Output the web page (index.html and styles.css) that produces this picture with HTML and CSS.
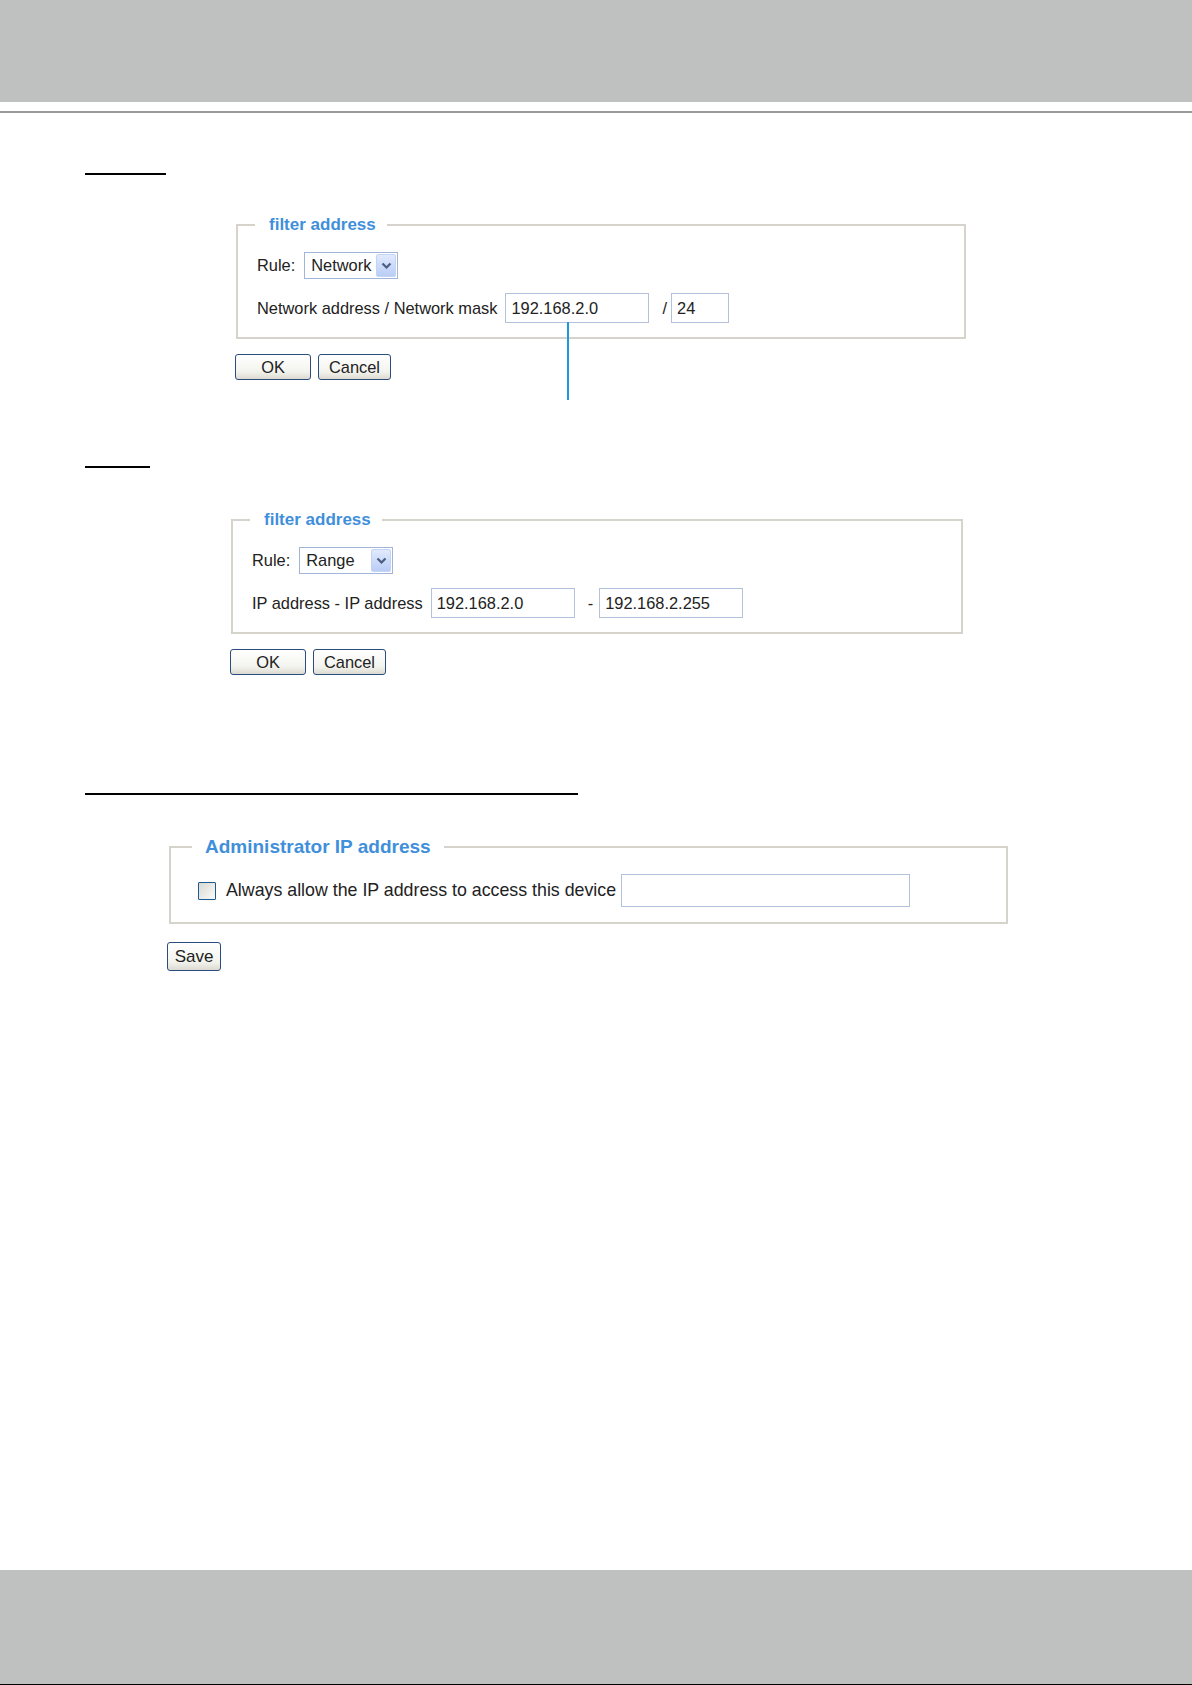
FILE: index.html
```html
<!DOCTYPE html>
<html lang="en">
<head>
  <meta charset="utf-8">
  <title>Access list - filter address</title>
  <link rel="stylesheet" href="styles.css">
</head>
<body>
  <div class="page-header"></div>
  <div class="page-rule"></div>

  <main class="content">
    <div class="title-rule title-rule-network"></div>
    <div class="panel panel-network">
      <fieldset>
        <legend>filter address</legend>
        <div class="row row-first">
          <span class="label">Rule:</span>
          <div class="select-box">
            <span class="select-text">Network</span>
            <span class="select-arrow">
              <svg width="11" height="8" viewBox="0 0 11 8"><path d="M1.5 1.5 L5.5 5.5 L9.5 1.5" fill="none" stroke="#4b5d80" stroke-width="2.2"/></svg>
            </span>
          </div>
        </div>
        <div class="row">
          <span class="label label-wide">Network address / Network mask</span>
          <span class="callout">
            <input class="field field-ip" type="text" value="192.168.2.0">
          </span>
          <span class="sep">/</span>
          <input class="field field-mask" type="text" value="24">
        </div>
      </fieldset>
      <div class="actions">
        <button class="btn btn-ok">OK</button>
        <button class="btn btn-cancel">Cancel</button>
      </div>
    </div>

    <div class="title-rule title-rule-range"></div>
    <div class="panel panel-range">
      <fieldset>
        <legend>filter address</legend>
        <div class="row row-first">
          <span class="label">Rule:</span>
          <div class="select-box">
            <span class="select-text">Range</span>
            <span class="select-arrow">
              <svg width="11" height="8" viewBox="0 0 11 8"><path d="M1.5 1.5 L5.5 5.5 L9.5 1.5" fill="none" stroke="#4b5d80" stroke-width="2.2"/></svg>
            </span>
          </div>
        </div>
        <div class="row">
          <span class="label label-wide">IP address - IP address</span>
          <input class="field field-range" type="text" value="192.168.2.0">
          <span class="sep sep-dash">-</span>
          <input class="field field-range" type="text" value="192.168.2.255">
        </div>
      </fieldset>
      <div class="actions">
        <button class="btn btn-ok">OK</button>
        <button class="btn btn-cancel">Cancel</button>
      </div>
    </div>

    <div class="title-rule title-rule-admin"></div>
    <div class="panel panel-admin">
      <fieldset>
        <legend>Administrator IP address</legend>
        <div class="row row-admin">
          <input class="check" type="checkbox" id="always-allow">
          <label class="check-label" for="always-allow">Always allow the IP address to access this device</label>
          <input class="field field-admin" type="text" value="">
        </div>
      </fieldset>
      <div class="actions actions-admin">
        <button class="btn btn-save">Save</button>
      </div>
    </div>
  </main>

  <div class="page-footer"></div>
</body>
</html>
```

FILE: styles.css
```css
:root {
  --band-color: #bfc1c0;
  --text-color: #222;
  --legend-color: #3f8fdb;
  --frame-color: #d6d3cc;
  --field-border: #b3c2dc;
}
body {
  margin: 0;
  min-height: 1685px;
  display: flex;
  flex-direction: column;
  background: #fff;
  color: var(--text-color);
  font-family: "Liberation Sans", Arial, sans-serif;
  font-size: 16.4px;
}
.page-header {
  height: 102px;
  background-color: var(--band-color);
}
.page-rule {
  margin-top: 9px;
  height: 2px;
  background-color: #9a9a9a;
}
.page-footer {
  margin-top: auto;
  height: 114px;
  background-color: var(--band-color);
  border-bottom: 1px solid #000;
}
.content {
  padding-left: 85px;
}

/* 标题被抹掉，只剩下划线 */
.title-rule {
  height: 2px;
  background-color: #000;
}
.title-rule-network {
  margin-top: 60px;
  width: 81px;
}
.title-rule-range {
  margin-top: 86px;
  width: 65px;
}
.title-rule-admin {
  margin-top: 118px;
  width: 493px;
}

.panel-network {
  margin: 40px 0 0 151px;
}
.panel-range {
  margin: 42px 0 0 146px;
}
.panel-admin {
  margin: 41px 0 0 84px;
}
.panel fieldset {
  box-sizing: border-box;
  margin: 0;
  border: 2px solid var(--frame-color);
  padding: 17px 19px 14px;
}
.panel-network fieldset {
  width: 730px;
}
.panel-range fieldset {
  width: 732px;
}
.panel-admin fieldset {
  width: 839px;
  padding: 16px 27px 15px;
}
.panel legend {
  margin-left: -2px;
  padding: 0 11px 0 14px;
  line-height: 20px;
  font-size: 17px;
  font-weight: bold;
  color: var(--legend-color);
}
.panel-admin legend {
  margin-left: -6px;
  padding: 0 13px;
  line-height: 22px;
  font-size: 19px;
}

.row {
  display: flex;
  align-items: center;
  margin-top: 14px;
}
.row-first,
.row-admin {
  margin-top: 0;
}
.label {
  margin-right: 9px;
}
.label-wide {
  margin-right: 8px;
}

.select-box {
  box-sizing: border-box;
  display: flex;
  align-items: center;
  justify-content: space-between;
  width: 94px;
  height: 27px;
  border: 1px solid #a1b5d8;
  padding: 1px 1px 1px 6px;
  background-color: #fff;
}
.select-arrow {
  box-sizing: border-box;
  display: flex;
  align-items: center;
  justify-content: center;
  width: 20px;
  height: 23px;
  border: 1px solid #c4d4f5;
  border-radius: 2px;
  background: linear-gradient(#e1eafd, #b9cdf6);
}

.field {
  box-sizing: border-box;
  height: 30px;
  border: 1px solid var(--field-border);
  padding: 0 5px;
  font: inherit;
  color: var(--text-color);
  outline: none;
}
.field-ip {
  display: block;
  width: 144px;
}
.field-mask {
  width: 58px;
}
.field-range {
  width: 144px;
}
.field-admin {
  width: 289px;
  height: 33px;
  margin-left: 5px;
}
.sep {
  margin: 0 4px 0 13px;
}
.sep-dash {
  margin: 0 6px 0 13px;
}

/* 指向 IP 输入框的说明线 */
.callout {
  position: relative;
}
.callout::after {
  content: "";
  position: absolute;
  top: 29px;
  left: 62px;
  width: 2px;
  height: 78px;
  background-color: #1a9ad9;
}

.check {
  appearance: none;
  box-sizing: border-box;
  width: 18px;
  height: 18px;
  margin: 0 10px 0 0;
  border: 1px solid #1f5a8c;
  border-radius: 1px;
  background: linear-gradient(135deg, #d9d9d3, #fafaf8);
}
.check-label {
  font-size: 17.8px;
}

.actions {
  display: flex;
  gap: 7px;
  margin: 15px 0 0 -1px;
}
.actions-admin {
  margin: 18px 0 0 -2px;
}
.btn {
  box-sizing: border-box;
  height: 26px;
  border: 1px solid #2b4d7d;
  border-radius: 3px;
  padding: 0;
  background: linear-gradient(#ffffff, #f3f3ee 70%, #dcdad0);
  font: inherit;
  color: var(--text-color);
  cursor: pointer;
}
.btn-ok {
  width: 76px;
}
.btn-cancel {
  width: 73px;
}
.btn-save {
  width: 54px;
  height: 29px;
  font-size: 17px;
}
```
